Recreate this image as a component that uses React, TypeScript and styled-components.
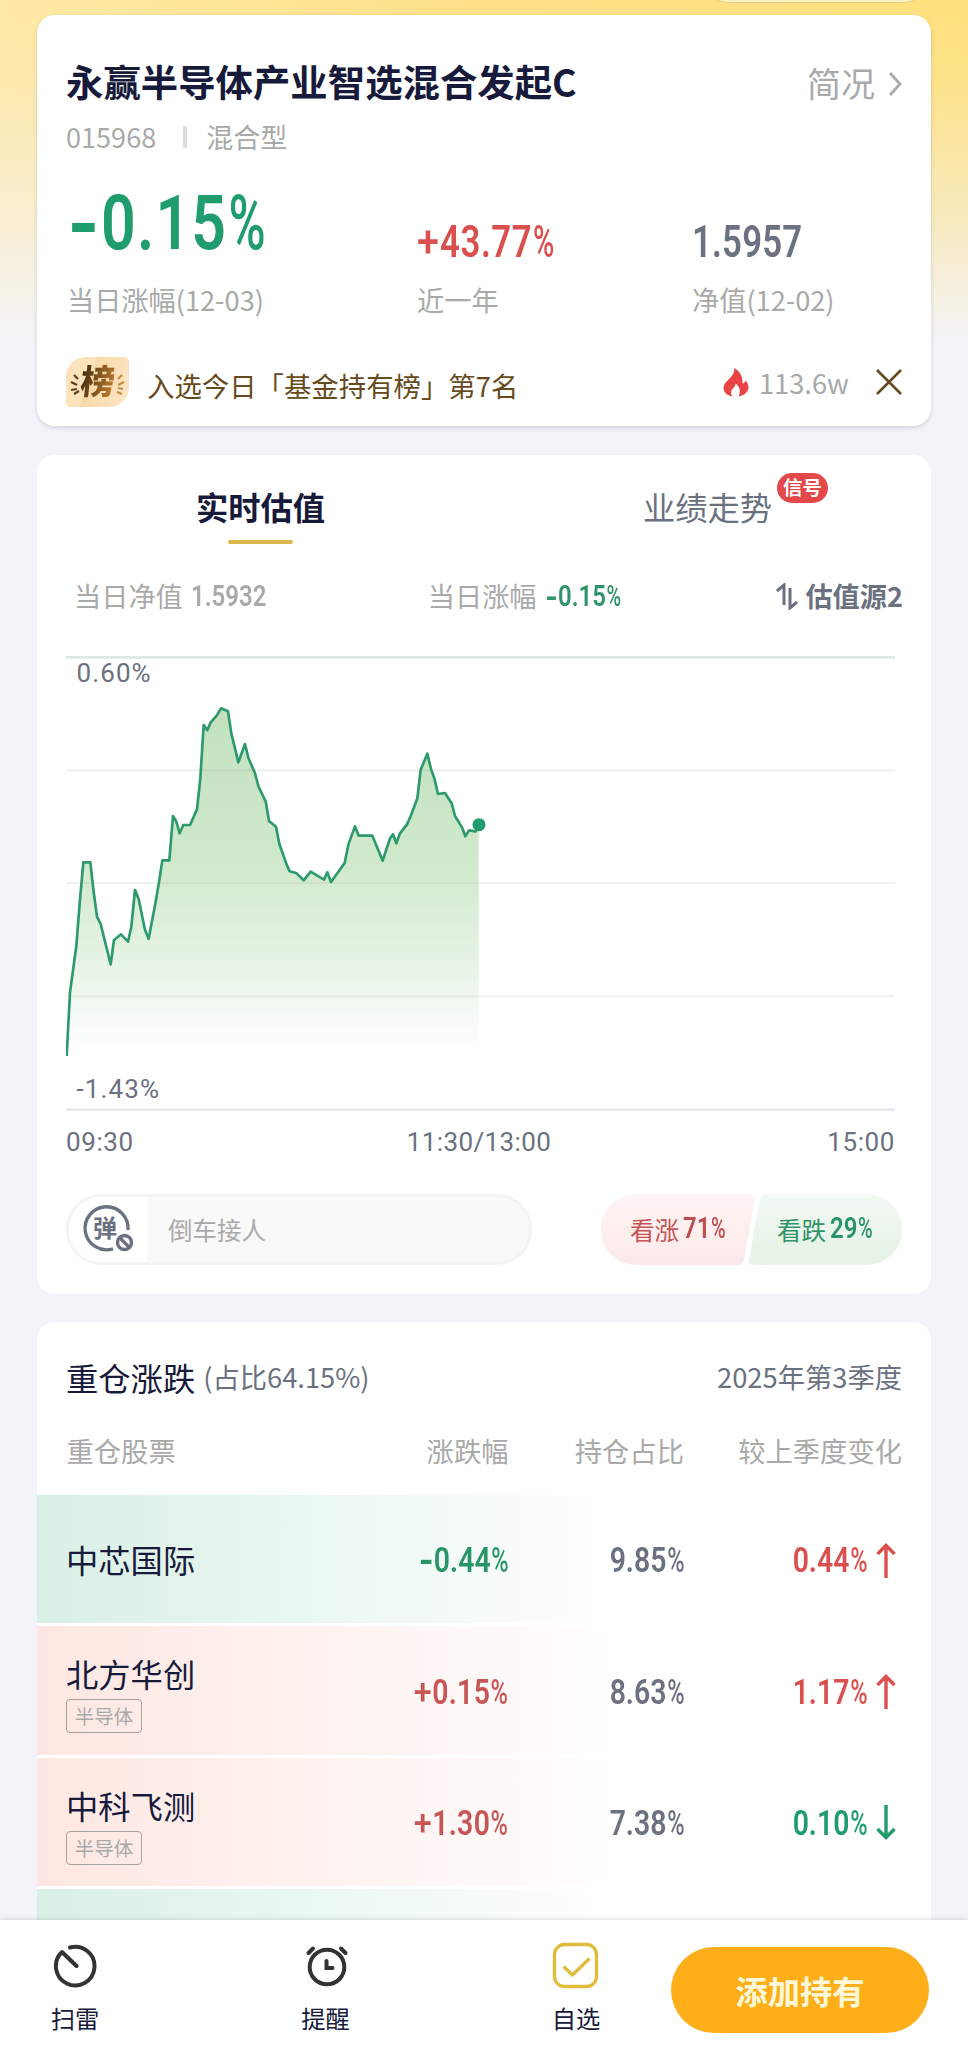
import React from "react";
import styled, { createGlobalStyle, css } from "styled-components";

const C = {
  navy: "#171a3a",
  slate: "#6b7180",
  gray: "#a9a9a9",
  green: "#1f9d6c",
  red: "#d9504f",
  brown: "#664a20",
  page: "#f3f4fa",
};

const Global = createGlobalStyle`
  * { box-sizing: border-box; }
  body { margin: 0; background: ${C.page}; }
`;

const Page = styled.div`
  position: relative;
  width: 968px;
  height: 2059px;
  overflow: hidden;
  display: flex;
  flex-direction: column;
  font-family: "Noto Sans CJK SC", sans-serif;
  color: ${C.navy};
  white-space: nowrap;
  background:
    linear-gradient(180deg, rgba(243, 244, 250, 0) 0, rgba(243, 244, 250, 0.1) 80px, rgba(243, 244, 250, 0.5) 210px, ${C.page} 350px),
    linear-gradient(90deg, #ffe9a6 0, #fee189 45%, #fee07c 100%);
`;

const TopPill = styled.div`
  position: absolute;
  left: 701px;
  top: -52px;
  width: 230px;
  height: 55px;
  border-radius: 28px;
  background: #fff0c0;
  border: 1px solid #e6cf8c;
`;

const Scroll = styled.main`
  flex: 1;
  min-height: 0;
  overflow: hidden;
  display: flex;
  flex-direction: column;
  padding: 15px 37px 0;
`;

const Card = styled.section<{ $h: number; $gap: number; $shadow?: boolean }>`
  flex: none;
  height: ${(p) => p.$h}px;
  margin-bottom: ${(p) => p.$gap}px;
  border-radius: 18px;
  background: #fff;
  overflow: hidden;
  ${(p) => p.$shadow && css`box-shadow: 0 2px 4px rgba(90, 95, 120, 0.22);`}
`;

const Line = styled.div<{ $h: number; $mt?: number; $pl?: number; $pr?: number }>`
  display: flex;
  align-items: center;
  height: ${(p) => p.$h}px;
  margin-top: ${(p) => p.$mt ?? 0}px;
  padding-left: ${(p) => p.$pl ?? 29}px;
  padding-right: ${(p) => p.$pr ?? 29}px;
`;

const Text = styled.span<{ $s: number; $c?: string; $b?: boolean; $drop?: number }>`
  font-size: ${(p) => p.$s}px;
  line-height: 1.3;
  padding-top: ${(p) => p.$drop ?? 0}px;
  color: ${(p) => p.$c ?? C.gray};
  font-weight: ${(p) => (p.$b ? 700 : 400)};
`;

const Push = styled.span`
  flex: 1;
`;

const FigureSlot = styled.span<{ $w: number; $end?: boolean }>`
  display: inline-flex;
  flex: none;
  width: ${(p) => p.$w}px;
  justify-content: ${(p) => (p.$end ? "flex-end" : "flex-start")};
`;

const Glyphs = styled.span<{ $s: number; $c: string; $end?: boolean; $ls: number }>`
  flex: none;
  font-family: Roboto, sans-serif;
  font-weight: 600;
  font-size: ${(p) => p.$s}px;
  line-height: 1;
  letter-spacing: ${(p) => p.$ls}em;
  color: ${(p) => p.$c};
  transform: scaleX(0.8);
  transform-origin: ${(p) => (p.$end ? "right" : "left")} center;
`;

const Percent = styled.span`
  display: inline-block;
  font-weight: 500;
  transform: scaleX(0.83);
  transform-origin: left center;
  margin: 0 -0.13em 0 0.02em;
`;

const Sign = styled.span<{ $minus: boolean }>`
  display: inline-block;
  font-weight: ${(p) => (p.$minus ? 800 : 500)};
  transform: ${(p) => (p.$minus ? "translateY(0.03em) scaleX(1.3)" : "scaleX(1.14)")};
  transform-origin: left center;
  margin-right: ${(p) => (p.$minus ? 0.12 : 0.09)}em;
`;

/** Condensed figure with a wide sign and a narrow percent mark. */
function Figure({ v, s, c, w, end, ls = 0 }: { v: string; s: number; c: string; w: number; end?: boolean; ls?: number }) {
  const sign = /^[-+]/.test(v) ? v[0] : "";
  const pct = v.endsWith("%");
  return (
    <FigureSlot $w={w} $end={end}>
      <Glyphs $s={s} $c={c} $end={end} $ls={ls}>
        {sign && <Sign $minus={sign === "-"}>{sign}</Sign>}
        {v.slice(sign.length, pct ? -1 : undefined)}
        {pct && <Percent>%</Percent>}
      </Glyphs>
    </FigureSlot>
  );
}

const Divider = styled.span`
  width: 4px;
  height: 22px;
  margin: 0 19px 0 27px;
  background: #dedede;
`;

const Metrics = styled.div`
  display: grid;
  grid-template-columns: 350px 275px 1fr;
  height: 130px;
  margin-top: 27.5px;
  padding-left: 30px;
`;

const Metric = styled.div`
  display: flex;
  flex-direction: column;
  justify-content: flex-end;
`;

const MetricLabel = styled(Text)<{ $mt: number }>`
  margin-top: ${(p) => p.$mt}px;
  height: 42px;
  line-height: 42px;
`;

const RankBadge = styled.span`
  position: relative;
  display: flex;
  align-items: center;
  justify-content: center;
  width: 63px;
  height: 50px;
  margin-right: 18px;
  border-radius: 20px 5px 20px 5px;
  background: linear-gradient(110deg, #fde3bb 0 38%, #f9d9a9 39%, #fde6c8);
`;

const RankGlyph = styled.span`
  font-size: 34px;
  line-height: 40px;
  font-weight: 900;
  padding: 0 3px;
  margin-top: -4px;
  transform: skewX(-6deg);
  background: linear-gradient(100deg, #4a3012 15%, #b8792d 85%);
  -webkit-background-clip: text;
  background-clip: text;
  color: transparent;
`;

const Rays = styled.svg`
  position: absolute;
  inset: 0;
`;

const Tabs = styled.div`
  display: grid;
  grid-template-columns: 1fr 1fr;
  height: 94px;
  padding-top: 29px;
`;

const Tab = styled.div<{ $on?: boolean }>`
  position: relative;
  display: flex;
  flex-direction: column;
  align-items: center;
  font-size: 32.3px;
  line-height: 44px;
  font-weight: ${(p) => (p.$on ? 700 : 400)};
  color: ${(p) => (p.$on ? C.navy : C.slate)};
`;

const Underline = styled.i`
  width: 65px;
  height: 4px;
  margin-top: 12px;
  border-radius: 2px;
  background: #dcb648;
`;

const Signal = styled.b`
  position: absolute;
  left: 293px;
  top: -11px;
  width: 51px;
  height: 30px;
  border-radius: 15px;
  background: #e3484a;
  color: #fff;
  font-size: 19.5px;
  line-height: 28px;
  text-align: center;
`;

const ChartBox = styled.div`
  position: relative;
  width: 829px;
  height: 457px;
  margin: 39px 0 0 29px;
`;

const AxisLabel = styled.span<{ $top: number }>`
  position: absolute;
  left: 10.5px;
  top: ${(p) => p.$top}px;
  font: 400 26px/30px Roboto, sans-serif;
  letter-spacing: 1.1px;
  color: ${C.slate};
`;

const Times = styled.div`
  display: flex;
  justify-content: space-between;
  width: 829px;
  height: 30px;
  margin: 15px 0 0 29px;
  font: 400 26px/30px Roboto, sans-serif;
  letter-spacing: 0.6px;
  color: ${C.slate};
  & > :nth-child(2) { letter-spacing: 0.4px; margin-right: 3px; }
`;

const Comment = styled.div`
  display: flex;
  align-items: stretch;
  width: 466px;
  height: 71px;
  border: 3px solid #f4f4f4;
  border-radius: 35px;
  overflow: hidden;
  background: #f9f9f9;
`;

const BulletToggle = styled.div`
  position: relative;
  width: 78px;
  margin-right: 21px;
  background: #fff;
`;

const BulletGlyph = styled.span`
  position: absolute;
  left: 24px;
  top: 13px;
  font-size: 24px;
  line-height: 34px;
  font-weight: 700;
  color: ${C.slate};
`;

const CommentText = styled(Text)`
  align-self: center;
`;

const Votes = styled.div`
  position: relative;
  display: flex;
  width: 301px;
  height: 71px;
`;

const VoteShape = styled.svg`
  position: absolute;
  inset: 0;
`;

const Vote = styled.div`
  position: relative;
  display: flex;
  align-items: center;
  width: 147px;
  padding-left: 29px;
`;

const VoteFigure = styled.span`
  display: flex;
  margin: -3px 0 0 3.5px;
`;

const Holdings = styled.div`
  display: flex;
  flex-direction: column;
  gap: 3px;
  margin-top: 24px;
`;

const columns = css`
  display: grid;
  grid-template-columns: 300px 142px 175.5px 1fr;
  align-items: center;
  padding: 0 29px 0 29.5px;
`;

const HoldHead = styled.div`
  ${columns}
  height: 40px;
  margin-top: 32px;
  & > :not(:first-child) { text-align: right; }
`;

const HoldRow = styled.div<{ $up: boolean }>`
  ${columns}
  height: 128.3px;
  background: linear-gradient(
    90deg,
    ${(p) => (p.$up ? "#fde7e2" : "#d9f0e6")} 0,
    ${(p) => (p.$up ? "rgba(253,231,226,0)" : "rgba(217,240,230,0)")} ${(p) => (p.$up ? 600 : 585)}px
  );
`;

const Cell = styled.div`
  display: flex;
  align-items: center;
  justify-content: flex-end;
  padding-top: 4px;
`;

const Stock = styled.div<{ $tagged: boolean }>`
  display: flex;
  flex-direction: column;
  align-items: flex-start;
  margin-left: -0.5px;
  padding-top: ${(p) => (p.$tagged ? 5 : 0)}px;
`;

const StockName = styled(Text)`
  line-height: 42px;
`;

const Tag = styled.span`
  margin-top: 5px;
  width: 76px;
  height: 34px;
  border: 1px solid #aaa3a3;
  border-radius: 4px;
  font-size: 19.5px;
  line-height: 32px;
  text-align: center;
  color: #a9a9a9;
`;

const Arrow = styled.svg<{ $down?: boolean }>`
  margin: -2px 6.5px 0 8.5px;
  ${(p) => p.$down && css`transform: rotate(180deg);`}
`;

const Bar = styled.nav`
  position: relative;
  flex: none;
  display: flex;
  height: 139px;
  background: #fff;
  box-shadow: 0 -1px 4px rgba(60, 60, 80, 0.16);
`;

const NavItem = styled.div<{ $w: number }>`
  display: flex;
  flex-direction: column;
  align-items: center;
  width: ${(p) => p.$w}px;
  padding-top: 20px;
  font-size: 24.3px;
  line-height: 34px;
  & > svg { margin-bottom: 12px; }
`;

const AddButton = styled.button`
  width: 258px;
  height: 86px;
  margin: 27px 0 0 20px;
  padding: 0;
  border: 0;
  border-radius: 43px;
  background: #fdae18;
  color: #fff8d8;
  font: 700 32.3px/40px "Noto Sans CJK SC", sans-serif;
`;

const POINTS: [number, number][] = [
  [80, 1128], [90, 937], [109, 798], [119, 670], [130, 547], [151, 547], [160, 628], [171, 710], [182, 732],
  [212, 853], [222, 780], [243, 763], [264, 785], [274, 740], [285, 630], [296, 657], [315, 750], [326, 776],
  [347, 665], [357, 607], [367, 541], [388, 541], [399, 408], [409, 425], [419, 460], [430, 435], [450, 435],
  [471, 388], [481, 295], [491, 135], [502, 151], [512, 127], [530, 107], [543, 85], [564, 94], [574, 160],
  [595, 247], [615, 192], [625, 233], [645, 280], [656, 321], [677, 364], [687, 423], [708, 440], [718, 492],
  [740, 554], [749, 574], [770, 580], [791, 601], [812, 575], [852, 599], [862, 577], [873, 606], [914, 549],
  [925, 494], [945, 439], [956, 467], [997, 467], [1028, 542], [1050, 475], [1059, 463], [1069, 490],
  [1080, 460], [1101, 433], [1111, 411], [1132, 355], [1142, 269], [1162, 221], [1173, 267], [1183, 295],
  [1194, 342], [1215, 339], [1235, 370], [1245, 408], [1266, 442], [1276, 469], [1287, 451], [1307, 454],
  [1316, 435],
];

function Chart() {
  const pts = POINTS.map(([x, y]) => `${x - 78},${y + 75}`).join(" ");
  return (
    <ChartBox>
      <svg width="829" height="457" viewBox="0 0 2487 1371">
        <defs>
          <linearGradient id="area" x1="0" y1="160" x2="0" y2="1190" gradientUnits="userSpaceOnUse">
            <stop offset="0" stopColor="#c3e1be" />
            <stop offset="0.45" stopColor="#d0e9cc" />
            <stop offset="0.78" stopColor="#eaf5e9" />
            <stop offset="1" stopColor="#ffffff" />
          </linearGradient>
        </defs>
        <polygon points={`${pts} 1238,1190 2,1190`} fill="url(#area)" />
        {[346, 684, 1024].map((y) => (
          <path key={y} d={`M0 ${y}H2487`} stroke="#8a9090" strokeOpacity="0.13" strokeWidth="6" />
        ))}
        <path d="M0 7H2487" stroke="#e1e6e6" strokeWidth="8" />
        <path d="M0 1364H2487" stroke="#e1e4e9" strokeWidth="7" />
        <polyline points={pts} fill="none" stroke="#2c9a6c" strokeWidth="8" strokeLinejoin="round" />
        <circle cx="1239" cy="509" r="19.5" fill={C.green} />
      </svg>
      <AxisLabel $top={3}>0.60%</AxisLabel>
      <AxisLabel $top={419}>-1.43%</AxisLabel>
    </ChartBox>
  );
}

function VoteBar() {
  return (
    <Votes>
      <VoteShape width="301" height="71" viewBox="0 0 301 71">
        <defs>
          <linearGradient id="up" x1="0" y1="0" x2="0" y2="1">
            <stop offset="0" stopColor="#fff5f4" />
            <stop offset="1" stopColor="#fce9e9" />
          </linearGradient>
          <linearGradient id="down" x1="0" y1="0" x2="0" y2="1">
            <stop offset="0" stopColor="#f3f9f3" />
            <stop offset="1" stopColor="#e5f2e5" />
          </linearGradient>
        </defs>
        <path d="M35 0H150Q155 0 154 5L143 66Q142 71 137 71H35A35.5 35.5 0 0 1 35 0Z" fill="url(#up)" />
        <path d="M165 0H266A35.5 35.5 0 0 1 266 71H152Q147 71 148 66L159 5Q160 0 165 0Z" fill="url(#down)" />
      </VoteShape>
      <Vote>
        <Text $s={24.6} $c="#c75454">看涨</Text>
        <VoteFigure><Figure v="71%" s={30} c="#c04e4e" w={42} /></VoteFigure>
      </Vote>
      <Vote>
        <Text $s={24.6} $c="#2f9468">看跌</Text>
        <VoteFigure><Figure v="29%" s={30} c="#2a9468" w={42} /></VoteFigure>
      </Vote>
    </Votes>
  );
}

type Holding = { name: string; tag?: string; chg: string; pct: string; diff: string; down?: boolean };

const HOLDINGS: Holding[] = [
  { name: "中芯国际", chg: "-0.44%", pct: "9.85%", diff: "0.44%" },
  { name: "北方华创", tag: "半导体", chg: "+0.15%", pct: "8.63%", diff: "1.17%" },
  { name: "中科飞测", tag: "半导体", chg: "+1.30%", pct: "7.38%", diff: "0.10%", down: true },
];

function HoldingRow({ h }: { h: Holding }) {
  const up = h.chg[0] === "+";
  const tone = h.down ? C.green : C.red;
  return (
    <HoldRow $up={up}>
      <Stock $tagged={!!h.tag}>
        <StockName $s={32.3} $c={C.navy}>{h.name}</StockName>
        {h.tag && <Tag>{h.tag}</Tag>}
      </Stock>
      <Cell><Figure v={h.chg} s={35.5} c={up ? "#c95656" : "#2a9668"} w={90} end ls={up ? 0.01 : 0} /></Cell>
      <Cell><Figure v={h.pct} s={35.5} c={C.slate} w={80} end /></Cell>
      <Cell>
        <Figure v={h.diff} s={35.5} c={tone} w={80} end />
        <Arrow $down={h.down} width="20" height="35" viewBox="0 0 20 35" fill="none" stroke={tone} strokeWidth="3.4">
          <path d="M10 35V3M1.5 11 10 2.5 18.5 11" />
        </Arrow>
      </Cell>
    </HoldRow>
  );
}

export default function App() {
  return (
    <Page>
      <Global />
      <TopPill />
      <Scroll>
        <Card $h={411} $gap={29} $shadow>
          <Line $h={50} $mt={41}>
            <Text $s={37.4} $c={C.navy} $b>永赢半导体产业智选混合发起C</Text>
            <Push />
            <Text $s={34} $drop={4}>简况</Text>
            <svg width="24" height="34" viewBox="0 0 24 34" fill="none" stroke={C.gray} strokeWidth="2.8" style={{ marginLeft: 3 }}>
              <path d="M12 9 22 20 12 31" />
            </svg>
          </Line>
          <Line $h={40} $mt={11}>
            <Text $s={27.1}>015968</Text>
            <Divider />
            <Text $s={27}>混合型</Text>
          </Line>
          <Metrics>
            <Metric>
              <Figure v="-0.15%" s={76} c={C.green} w={200} ls={0.019} />
              <MetricLabel $s={27.2} $mt={17}>当日涨幅(12-03)</MetricLabel>
            </Metric>
            <Metric>
              <Figure v="+43.77%" s={43.5} c={C.red} w={140} ls={0.016} />
              <MetricLabel $s={27.2} $mt={13}>近一年</MetricLabel>
            </Metric>
            <Metric>
              <Figure v="1.5957" s={43.5} c={C.slate} w={110} ls={0.005} />
              <MetricLabel $s={27.2} $mt={13}>净值(12-02)</MetricLabel>
            </Metric>
          </Metrics>
          <Line $h={54} $mt={40.5} $pr={29}>
            <RankBadge>
              <Rays width="63" height="50" viewBox="0 0 63 50" fill="none" strokeWidth="2.2">
                <path d="M8 18l4 4M5 25l6 3M5 33l6-1M8 37l5-3" stroke="#5d3e19" />
                <path d="M56 18l-4 4M58 25l-6 3M57 32l-5-1M56 37l-5-2" stroke="#c48c3f" />
              </Rays>
              <RankGlyph>榜</RankGlyph>
            </RankBadge>
            <Text $s={27.4} $c={C.brown} $drop={7}>入选今日「基金持有榜」第7名</Text>
            <Push />
            <svg width="26" height="30" viewBox="0 0 26 30" style={{ marginRight: 10 }}>
              <path
                d="M11 1C12 5 10 8 6 12 3 15 .5 17.500.5 21 .5 25 4 28.500 9.500 29.500 7 26 8 23.500 10 21.500 11.500 20 12.500 18.500 12.500 16.500 16 19 18.500 23 15.500 29.500 21 28.500 25.500 25 25.500 20.500 25.500 17.500 24 15 22.500 13.500 22 15.500 21 16.500 19.500 16.500 20 10 17 4 11 1Z"
                fill="#ea4345"
              />
            </svg>
            <Text $s={27.3} $drop={2}>113.6w</Text>
            <svg width="26" height="26" viewBox="0 0 26 26" fill="none" stroke={C.brown} strokeWidth="2.6" style={{ marginLeft: 27 }}>
              <path d="M1 1 25 25M25 1 1 25" />
            </svg>
          </Line>
        </Card>

        <Card $h={839} $gap={28}>
          <Tabs>
            <Tab $on>实时估值<Underline /></Tab>
            <Tab>业绩走势<Signal>信号</Signal></Tab>
          </Tabs>
          <Line $h={40} $mt={27} $pl={37} $pr={28}>
            <Text $s={27.2}>当日净值</Text>
            <FigureSlot $w={8} />
            <Figure v="1.5932" s={30} c={C.gray} w={237} />
            <Text $s={27.2}>当日涨幅</Text>
            <FigureSlot $w={8} />
            <Figure v="-0.15%" s={30} c="#2f9468" w={80} />
            <Push />
            <svg width="22" height="27" viewBox="0 0 22 27" fill="none" stroke={C.slate} strokeWidth="3" style={{ marginRight: 7 }}>
              <path d="M1 8 8 2V22M14 5V25L21 19" />
            </svg>
            <Text $s={27.2} $c={C.slate} $b>估值源2</Text>
          </Line>
          <Chart />
          <Times>
            <span>09:30</span>
            <span>11:30/13:00</span>
            <span>15:00</span>
          </Times>
          <Line $h={71} $mt={37} $pr={29}>
            <Comment>
              <BulletToggle>
                <svg width="78" height="65" viewBox="0 0 78 65" fill="none" stroke={C.slate} strokeWidth="3.4">
                  <path d="M59 33A21.500 21.500 0 1 0 44 51.800" />
                  <circle cx="55.500" cy="45.500" r="7" />
                  <path d="M51 41l9 9" />
                </svg>
                <BulletGlyph>弹</BulletGlyph>
              </BulletToggle>
              <CommentText $s={24.5}>倒车接人</CommentText>
            </Comment>
            <Push />
            <VoteBar />
          </Line>
        </Card>

        <Card $h={760} $gap={0}>
          <Line $h={44} $mt={33} $pl={29}>
            <Text $s={32.3} $c={C.navy}>重仓涨跌</Text>
            <FigureSlot $w={8} />
            <Text $s={27.3} $c={C.slate}>(占比64.15%)</Text>
            <Push />
            <Text $s={27.3} $c={C.slate}>2025年第3季度</Text>
          </Line>
          <HoldHead>
            <Text $s={27.3}>重仓股票</Text>
            <Text $s={27.3}>涨跌幅</Text>
            <Text $s={27.3}>持仓占比</Text>
            <Text $s={27.3}>较上季度变化</Text>
          </HoldHead>
          <Holdings>
            {HOLDINGS.map((h) => <HoldingRow key={h.name} h={h} />)}
            <HoldRow $up={false} />
          </Holdings>
        </Card>
      </Scroll>

      <Bar>
        <NavItem $w={150}>
          <svg width="48" height="49" viewBox="0 0 48 49" fill="none" stroke="#333" strokeWidth="4" strokeLinecap="round">
            <path d="M19 7.500A19.300 19.300 0 1 1 11 12L25.500 26" strokeLinejoin="round" />
          </svg>
          扫雷
        </NavItem>
        <NavItem $w={351}>
          <svg width="48" height="49" viewBox="0 0 48 49" fill="none" stroke="#333" strokeWidth="4" strokeLinecap="round">
            <circle cx="25" cy="27" r="17.300" />
            <path d="M24.500 21v7h6M6.500 13l4.500-4.500M43.500 13l-4.500-4.500" />
          </svg>
          提醒
        </NavItem>
        <NavItem $w={150}>
          <svg width="48" height="49" viewBox="0 0 48 49" fill="none" stroke="#e0bb3c" strokeWidth="3.300">
            <rect x="2.500" y="4.500" width="42" height="42" rx="10" />
            <path d="M11.500 26.500 20.500 35 37.500 18.500" />
          </svg>
          自选
        </NavItem>
        <AddButton>添加持有</AddButton>
      </Bar>
    </Page>
  );
}
